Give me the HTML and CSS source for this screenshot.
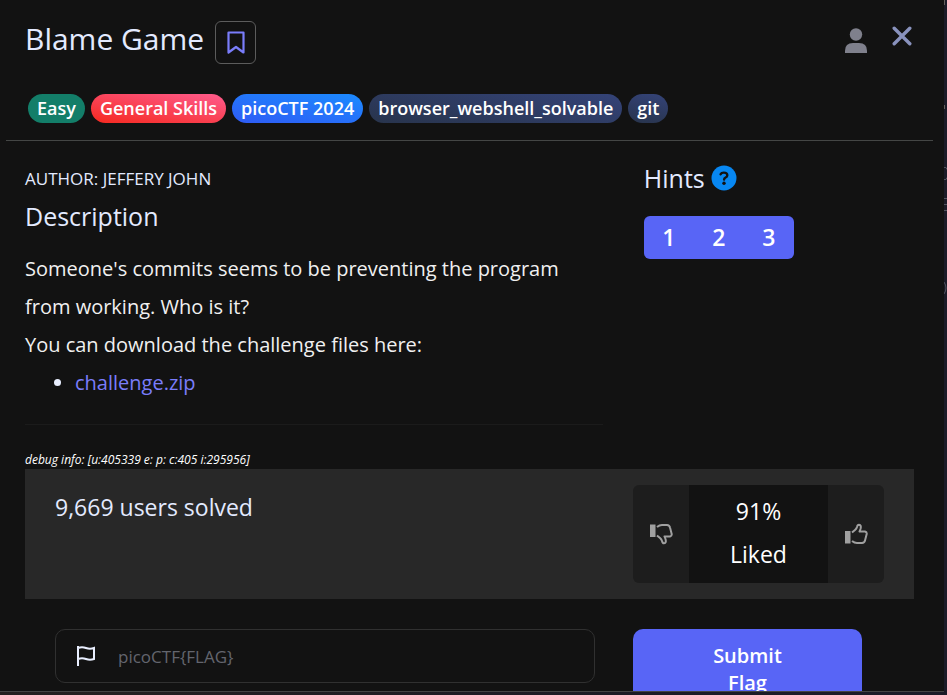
FILE: index.html
```html
<!DOCTYPE html>
<html lang="en">
<head>
<meta charset="utf-8">
<title>Blame Game</title>
<link rel="stylesheet" href="styles.css">
</head>
<body>
<svg class="backdrop" width="3" height="300" viewBox="0 0 3 300" aria-hidden="true">
  <path d="M0 0h1v5h-1zM0 105h1v4h-1z" fill="#65615e"/>
  <path d="M0 167.500h2l1 2M0 179.500h2l1-2M0 198.500h3M0 204.500h3M0 210.500h3M0 282q4 6 0 12" fill="none" stroke="#52545f"/>
</svg>
<main class="modal" role="dialog" aria-labelledby="title">
  <header class="head">
    <div class="top">
      <h1 id="title">Blame Game</h1>
      <button class="bookmark" aria-label="Bookmark">
        <svg width="18" height="24" viewBox="0 0 18 24"><path d="M1.500 1.500h15v20l-7.500-5.500-7.500 5.500z" fill="none" stroke="#7a7dfb" stroke-width="2.200" stroke-linejoin="round"/></svg>
      </button>
      <div class="actions">
        <button class="plain" aria-label="Profile">
          <svg width="22" height="26" viewBox="0 0 22 26" fill="#7f808c"><circle cx="11" cy="6.500" r="6.200"/><path d="M0 25v-2.300q0-7.700 8-7.700h6q8 0 8 7.700v2.300z"/></svg>
        </button>
        <button class="plain" aria-label="Close">
          <svg width="20" height="20" viewBox="0 0 20 20"><path d="M2.200 2.200l15.600 15.600M17.800 2.200L2.200 17.800" stroke="#8992bd" stroke-width="3.400" stroke-linecap="round"/></svg>
        </button>
      </div>
    </div>
    <div class="tags">
      <span class="tag easy">Easy</span>
      <span class="tag skills">General Skills</span>
      <span class="tag event">picoCTF 2024</span>
      <span class="tag">browser_webshell_solvable</span>
      <span class="tag">git</span>
    </div>
  </header>
  <div class="content">
    <div class="columns">
      <section class="info">
        <p class="author">AUTHOR: JEFFERY JOHN</p>
        <h2>Description</h2>
        <div class="text">
          <p>Someone's commits seems to be preventing the program from working. Who is it?</p>
          <p>You can download the challenge files here:</p>
          <ul><li><a href="#">challenge.zip</a></li></ul>
        </div>
      </section>
      <section class="hints">
        <h2>Hints
          <svg width="26" height="26" viewBox="0 0 26 26" aria-hidden="true"><circle cx="13" cy="13" r="12.500" fill="#0787f2"/><path d="M9.600 9.300q.7-1.700 3.200-1.700 3.500 0 3.500 2.600 0 1.400-1.700 2.300-1.500.8-1.500 2" fill="none" stroke="#121212" stroke-width="2.400" stroke-linecap="round"/><circle cx="13" cy="18.200" r="1.700" fill="#121212"/></svg>
        </h2>
        <div class="group">
          <button>1</button><button>2</button><button>3</button>
        </div>
      </section>
    </div>
    <p class="debug">debug info: [u:405339 e: p: c:405 i:295956]</p>
    <section class="stats">
      <p class="solved">9,669 users solved</p>
      <div class="rating">
        <button aria-label="Dislike">
          <svg class="down" width="24" height="22" viewBox="0 0 24 22"><path d="M1 8h5.500v12.500h-5.500z" fill="#a0a0a0"/><path d="M8 9.500l3-2.500q1.500-1.200 2-3 .4-2.300 2-2.300 2.600.3 1.500 4.300l-1 2.500h5.500q2 .6 1.700 2.500l-1.700 6.500q-.5 2.300-3 2.500h-5q-2.500 0-5-2" fill="none" stroke="#a0a0a0" stroke-width="2" stroke-linejoin="round"/></svg>
        </button>
        <div class="score"><p>91%</p><p>Liked</p></div>
        <button aria-label="Like">
          <svg width="24" height="22" viewBox="0 0 24 22"><path d="M1 8h5.500v12.500h-5.500z" fill="#a0a0a0"/><path d="M8 9.500l3-2.500q1.500-1.200 2-3 .4-2.300 2-2.300 2.600.3 1.500 4.300l-1 2.500h5.500q2 .6 1.700 2.500l-1.700 6.500q-.5 2.300-3 2.500h-5q-2.500 0-5-2" fill="none" stroke="#a0a0a0" stroke-width="2" stroke-linejoin="round"/></svg>
        </button>
      </div>
    </section>
    <form class="flag">
      <label class="field">
        <svg width="20" height="22" viewBox="0 0 20 22" aria-hidden="true"><path d="M2 1v20M2 3q4-1.500 8 0t8 0v11q-4 1.500-8 0t-8 0" fill="none" stroke="#e9efff" stroke-width="2"/></svg>
        <input type="text" placeholder="picoCTF{FLAG}" aria-label="Flag">
      </label>
      <button class="submit" type="button">Submit Flag</button>
    </form>
  </div>
</main>
</body>
</html>
```
FILE: styles.css
```css
* { box-sizing: border-box; margin: 0; }
body {
  height: 100vh;
  padding: 0 3px 3px 0;
  overflow: hidden;
  background: linear-gradient(90deg, #242020, #1c1b25 65%, #1b1b28);
  font-family: "Open Sans", sans-serif;
  color: #e3eaff;
}
.backdrop { position: absolute; top: 0; right: 0; }
button { font: inherit; color: inherit; border: 0; padding: 0; background: none; cursor: pointer; }
h1, h2 { font-weight: 400; }
svg { display: block; }
.modal {
  height: 100%;
  overflow: hidden;
  background: #121212;
  border-bottom: 1px solid #444;
}
.head {
  margin: 0 11px 0 6px;
  padding: 20px 20px 17px 19px;
  border-bottom: 1px solid #444645;
}
.top { display: flex; align-items: flex-start; gap: 11px; }
h1 { font-size: 30px; line-height: 38px; }
.bookmark {
  width: 41px;
  height: 43px;
  margin-top: 1px;
  display: grid;
  place-items: center;
  border: 1px solid #5c5c5c;
  border-radius: 6px;
}
.actions { display: flex; gap: 25px; margin: 6px 1px 0 auto; }
.plain { height: 28px; display: flex; }
.plain:first-child { align-items: flex-end; }
.tags { display: flex; gap: 6px; margin: 30px 0 0 3px; }
.tag {
  padding: 0 9px;
  border-radius: 15px;
  font-size: 18px;
  font-weight: 600;
  line-height: 29px;
  color: #fff;
  background: linear-gradient(10deg, #28344c, #344378);
}
.easy { background: #137e69; }
.skills { background: linear-gradient(10deg, #f5291f, #ff5c8e); }
.event { background: linear-gradient(10deg, #2f5bf5, #1b8bff); }
.content { padding: 0 30px 0 25px; }
.columns { display: grid; grid-template-columns: 65% 1fr; gap: 41px; }
.info { padding: 25px 0 22px; border-bottom: 1px solid #1b1b1b; }
.author { font-size: 17px; line-height: 26px; }
h2 { font-size: 25px; line-height: 30px; }
.info h2 { margin: 9px 0 19px; }
.text { font-size: 20px; line-height: 38px; color: #f0f0f0; }
.text ul { padding-left: 50px; }
.text li::marker { color: #e9efff; }
a { color: #7a7dfb; text-decoration: none; }
.hints { padding-top: 22px; }
.hints h2 { display: flex; align-items: center; gap: 6px; }
.group { display: inline-flex; margin-top: 23px; border-radius: 6px; overflow: hidden; background: #5865f6; }
.group button { width: 50px; font-size: 23px; font-weight: 600; line-height: 43px; color: #fff; }
.debug { margin-top: 26px; font-size: 12px; line-height: 18px; font-style: italic; color: #fff; }
.stats {
  display: flex;
  justify-content: space-between;
  align-items: flex-start;
  padding: 16px 30px;
  background: #282828;
}
.solved { font-size: 23px; line-height: 45px; }
.rating { display: flex; border-radius: 6px; overflow: hidden; background: #1d1d1d; }
.rating button { width: 56px; display: grid; place-items: center; }
.down { transform: scaleY(-1); }
.score { width: 139px; padding: 5px 0 7px; background: #121212; color: #fff; text-align: center; font-size: 23px; line-height: 43px; }
.flag { display: flex; align-items: flex-start; gap: 38px; margin: 30px 52px 0 30px; }
.field {
  flex: 1;
  display: flex;
  align-items: center;
  gap: 22px;
  height: 54px;
  padding: 0 20px;
  border: 1px solid #303030;
  border-radius: 10px;
}
.field input { flex: 1; min-width: 0; padding: 0; border: 0; outline: 0; background: none; color: #fff; font: 17px "Open Sans", sans-serif; }
.field input::placeholder { color: #63656e; opacity: 1; }
.submit { width: 229px; padding: 13px 70px; border-radius: 10px; background: #5865f6; color: #fff; font-size: 20px; font-weight: 600; line-height: 27px; }
```
